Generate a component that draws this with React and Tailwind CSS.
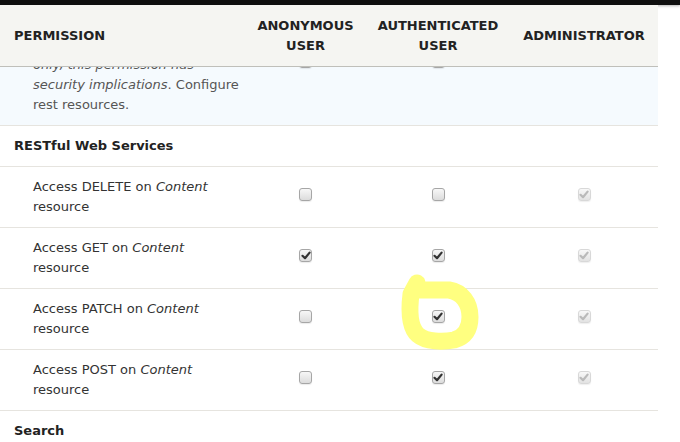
import React from "react";
import clsx from "clsx";

const rows = [
  { method: "DELETE", anon: false, auth: false },
  { method: "GET", anon: true, auth: true },
  { method: "PATCH", anon: false, auth: true },
  { method: "POST", anon: false, auth: true },
];

function Box({ checked, disabled }) {
  return (
    <span
      className={clsx(
        "flex h-[13px] w-[13px] items-center justify-center rounded-[3px] border bg-linear-to-b from-[#f7f7f7] to-[#dcdcdc] shadow-[0_1px_1px_rgba(0,0,0,0.08)]",
        disabled ? "border-[#cfcfcf] opacity-80" : "border-[#a6a6a6]"
      )}
    >
      {checked && (
        <svg width="10" height="9" viewBox="0 0 10 9">
          <path
            d="M1.5 4.8 L4 7.2 L8.6 1.6"
            fill="none"
            stroke={disabled ? "#a9a9a9" : "#333"}
            strokeWidth="2.2"
            strokeLinecap="round"
            strokeLinejoin="round"
          />
        </svg>
      )}
    </span>
  );
}

const cols = "grid grid-cols-[245px_121px_144px_148px]";

export default function App() {
  return (
    <div className="relative h-[442px] w-[680px] overflow-hidden bg-white font-['DejaVu_Sans','Liberation_Sans',sans-serif] text-[13px] leading-[20px] text-[#333]">
      {/* toolbar strip */}
      <div className="h-[5px] w-full bg-[#0f0f0f] shadow-[0_1px_3px_rgba(0,0,0,0.3)]" />

      <div className="w-[658px]">
        {/* sticky header */}
        <div
          className={clsx(
            cols,
            "relative z-10 h-[62px] items-center border-b border-[#bfbfba] bg-[#f5f5f2] font-bold uppercase text-[#222]"
          )}
        >
          <div className="pl-[14px]">Permission</div>
          <div className="text-center">
            Anonymous
            <br />
            User
          </div>
          <div className="text-center">
            Authenticated
            <br />
            User
          </div>
          <div className="text-center">Administrator</div>
        </div>

        {/* description row, scrolled partly under the header */}
        <div className={clsx(cols, "h-[59px] overflow-hidden border-b border-[#e6e4df] bg-[#f5fafe]")}>
          <div className="-mt-[12px] whitespace-nowrap pl-[33px] text-[#555]">
            <em>only, this permission has</em>
            <br />
            <em>security implications</em>. Configure
            <br />
            rest resources.
          </div>
          <div className="-mt-[12px] flex justify-center">
            <Box />
          </div>
          <div className="-mt-[12px] flex justify-center">
            <Box />
          </div>
          <div />
        </div>

        <div className="border-b border-[#e6e4df] px-[14px] py-[10px] font-bold text-[#222]">
          RESTful Web Services
        </div>

        {rows.map((r) => (
          <div key={r.method} className={clsx(cols, "items-center border-b border-[#e6e4df] py-[10px]")}>
            <div className="pl-[33px]">
              Access {r.method} on <em>Content</em>
              <br />
              resource
            </div>
            <div className="mb-[6px] flex justify-center">
              <Box checked={r.anon} />
            </div>
            <div className="mb-[6px] flex justify-center">
              <Box checked={r.auth} />
            </div>
            <div className="mb-[6px] flex justify-center">
              <Box checked disabled />
            </div>
          </div>
        ))}

        <div className="px-[14px] py-[10px] font-bold text-[#222]">Search</div>
      </div>

      {/* yellow marker scribble */}
      <svg className="absolute left-[398px] top-[270px]" width="90" height="86" viewBox="0 0 90 86">
        <path
          d="M19 13 L13 24 C11 40 11 57 20 65 C28 72 45 72 56 70 C67 67 72 59 72 47 C72 33 64 22 51 20 L22 20"
          fill="none"
          stroke="#ffff80"
          strokeWidth="17"
          strokeLinecap="round"
          strokeLinejoin="round"
        />
      </svg>
    </div>
  );
}
